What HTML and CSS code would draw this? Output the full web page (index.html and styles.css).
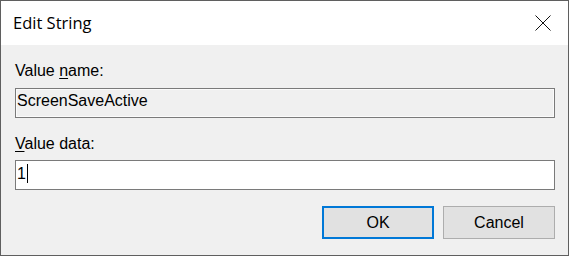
FILE: index.html
```html
<!DOCTYPE html>
<html>
<head>
<meta charset="utf-8">
<link rel="stylesheet" href="styles.css">
</head>
<body>
<div class="dialog">
  <div class="titlebar">
    <span class="title">Edit String</span>
    <svg class="close" width="16" height="16" viewBox="0 0 16 16"><path d="M0.5 0.5 L15.5 15.5 M15.5 0.5 L0.5 15.5" stroke="#111" stroke-width="1" fill="none"/></svg>
  </div>
  <div class="content">
    <div class="label">Value <u>n</u>ame:</div>
    <div class="field readonly">ScreenSaveActive</div>
    <div class="label label-data"><u>V</u>alue data:</div>
    <div class="field editable">1<span class="caret"></span></div>
    <div class="buttons">
      <div class="btn btn-default">OK</div>
      <div class="btn">Cancel</div>
    </div>
  </div>
</div>
</body>
</html>
```
FILE: styles.css
```css
html, body {
  margin: 0;
  padding: 0;
  background: #f0f0f0;
}

.dialog {
  width: 569px;
  height: 256px;
  box-sizing: border-box;
  border: 1px solid #5f5f5f;
  background: #f0f0f0;
  display: flex;
  flex-direction: column;
  font-family: "Liberation Sans", Arial, sans-serif;
  font-size: 16px;
  color: #000;
}

.titlebar {
  height: 44px;
  background: #fff;
  display: flex;
  align-items: center;
  padding-left: 12px;
  padding-right: 17px;
}

.title {
  font-family: "Open Sans", "Noto Sans", sans-serif;
  font-size: 16.5px;
  line-height: 44px;
  color: #000;
}

.close {
  margin-left: auto;
  display: block;
}

.content {
  flex: 1;
  padding: 17px 13px 0 14px;
  display: flex;
  flex-direction: column;
}

.label {
  line-height: 18px;
  height: 18px;
  margin-bottom: 8px;
}

.label u {
  text-decoration: underline;
  text-underline-offset: 2px;
}

.label-data {
  margin-top: 17px;
  margin-bottom: 7px;
}

.field {
  height: 30px;
  box-sizing: border-box;
  border: 1px solid #7a7a7a;
  padding: 3px 2px 0 1px;
  line-height: 18px;
  white-space: nowrap;
}

.readonly {
  background: #f0f0f0;
  box-shadow: inset 0 0 0 1px #fbfbfb;
}

.editable {
  background: #fff;
}

.caret {
  display: inline-block;
  width: 1px;
  height: 19px;
  background: #000;
  margin-left: 1px;
  vertical-align: -4px;
}

.buttons {
  margin-top: 16px;
  display: flex;
  justify-content: flex-end;
  gap: 9px;
}

.btn {
  width: 112px;
  height: 33px;
  box-sizing: border-box;
  border: 1px solid #adadad;
  background: #e1e1e1;
  display: flex;
  align-items: center;
  justify-content: center;
  line-height: 18px;
}

.btn-default {
  border: 2px solid #0078d7;
}
```
